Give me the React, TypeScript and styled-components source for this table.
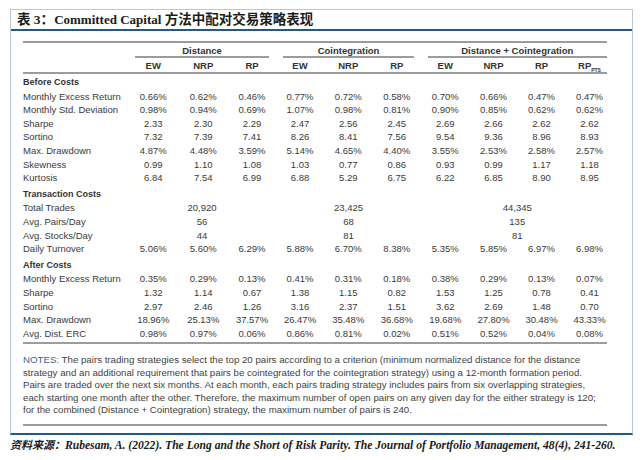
import { Fragment } from 'react';
import styled, { createGlobalStyle } from 'styled-components';

type Row = { label: string; values: string[] };

const beforeCosts: Row[] = [
  { label: 'Monthly Excess Return', values: ['0.66%', '0.62%', '0.46%', '0.77%', '0.72%', '0.58%', '0.70%', '0.66%', '0.47%', '0.47%'] },
  { label: 'Monthly Std. Deviation', values: ['0.98%', '0.94%', '0.69%', '1.07%', '0.98%', '0.81%', '0.90%', '0.85%', '0.62%', '0.62%'] },
  { label: 'Sharpe', values: ['2.33', '2.30', '2.29', '2.47', '2.56', '2.45', '2.69', '2.66', '2.62', '2.62'] },
  { label: 'Sortino', values: ['7.32', '7.39', '7.41', '8.26', '8.41', '7.56', '9.54', '9.36', '8.96', '8.93'] },
  { label: 'Max. Drawdown', values: ['4.87%', '4.48%', '3.59%', '5.14%', '4.65%', '4.40%', '3.55%', '2.53%', '2.58%', '2.57%'] },
  { label: 'Skewness', values: ['0.99', '1.10', '1.08', '1.03', '0.77', '0.86', '0.93', '0.99', '1.17', '1.18'] },
  { label: 'Kurtosis', values: ['6.84', '7.54', '6.99', '6.88', '5.29', '6.75', '6.22', '6.85', '8.90', '8.95'] },
];

// values that span a whole group (Distance / Cointegration / Distance + Cointegration)
const groupRows: Row[] = [
  { label: 'Total Trades', values: ['20,920', '23,425', '44,345'] },
  { label: 'Avg. Pairs/Day', values: ['56', '68', '135'] },
  { label: 'Avg. Stocks/Day', values: ['44', '81', '81'] },
];

const turnover: Row = {
  label: 'Daily Turnover',
  values: ['5.06%', '5.60%', '6.29%', '5.88%', '6.70%', '8.38%', '5.35%', '5.85%', '6.97%', '6.98%'],
};

const afterCosts: Row[] = [
  { label: 'Monthly Excess Return', values: ['0.35%', '0.29%', '0.13%', '0.41%', '0.31%', '0.18%', '0.38%', '0.29%', '0.13%', '0.07%'] },
  { label: 'Sharpe', values: ['1.32', '1.14', '0.67', '1.38', '1.15', '0.82', '1.53', '1.25', '0.78', '0.41'] },
  { label: 'Sortino', values: ['2.97', '2.46', '1.26', '3.16', '2.37', '1.51', '3.62', '2.69', '1.48', '0.70'] },
  { label: 'Max. Drawdown', values: ['18.96%', '25.13%', '37.57%', '26.47%', '35.48%', '36.68%', '19.68%', '27.80%', '30.48%', '43.33%'] },
  { label: 'Avg. Dist. ERC', values: ['0.98%', '0.97%', '0.06%', '0.86%', '0.81%', '0.02%', '0.51%', '0.52%', '0.04%', '0.08%'] },
];

const groups = [
  { name: 'Distance', span: 3 },
  { name: 'Cointegration', span: 3 },
  { name: 'Distance + Cointegration', span: 4 },
];

const colHeads = ['EW', 'NRP', 'RP', 'EW', 'NRP', 'RP', 'EW', 'NRP', 'RP'];

const notes = [
  'The pairs trading strategies select the top 20 pairs according to a criterion (minimum normalized distance for the distance',
  'strategy and an additional requirement that pairs be cointegrated for the cointegration strategy) using a 12-month formation period.',
  'Pairs are traded over the next six months. At each month, each pairs trading strategy includes pairs from six overlapping strategies,',
  'each starting one month after the other. Therefore, the maximum number of open pairs on any given day for the either strategy is 120;',
  'for the combined (Distance + Cointegration) strategy, the maximum number of pairs is 240.',
];

export default function App() {
  const dataRows = (rows: Row[]) =>
    rows.map((r) => (
      <Fragment key={r.label}>
        <Label>{r.label}</Label>
        {r.values.map((v, i) => (
          <Cell key={i}>{v}</Cell>
        ))}
      </Fragment>
    ));

  return (
    <Page>
      <GlobalStyle />
      <Frame>
        <TitleBar>
          表 3：<Latin>Committed Capital</Latin> 方法中配对交易策略表现
        </TitleBar>
        <Content>
          <Table>
            <Head>
              <span />
              {groups.map((g) => (
                <GroupHead key={g.name} $span={g.span}>
                  {g.name}
                </GroupHead>
              ))}
              <span />
              {colHeads.map((h, i) => (
                <ColHead key={i}>{h}</ColHead>
              ))}
              <ColHead>
                RP<Sub>PTS</Sub>
              </ColHead>
            </Head>
            <Body>
              <Section $first>Before Costs</Section>
              {dataRows(beforeCosts)}
              <Section>Transaction Costs</Section>
              {groupRows.map((r) => (
                <Fragment key={r.label}>
                  <Label>{r.label}</Label>
                  {r.values.map((v, i) => (
                    <Cell key={i} $span={groups[i].span}>
                      {v}
                    </Cell>
                  ))}
                </Fragment>
              ))}
              {dataRows([turnover])}
              <Section>After Costs</Section>
              {dataRows(afterCosts)}
            </Body>
          </Table>
          <Notes>
            {notes.map((line, i) => (
              <NoteLine key={i}>
                {i === 0 && <NoteTag>NOTES: </NoteTag>}
                {line}
              </NoteLine>
            ))}
          </Notes>
        </Content>
      </Frame>
      <Source>
        <SourceTag>资料来源：</SourceTag>
        Rubesam, A. (2022). The Long and the Short of Risk Parity. The Journal of Portfolio Management, 48(4), 241-260.
      </Source>
    </Page>
  );
}

const GlobalStyle = createGlobalStyle`
  body {
    margin: 0;
    background: #fff;
  }
`;

const Page = styled.div`
  width: 642px;
  height: 460px;
  padding: 9px 10px 0;
  box-sizing: border-box;
  overflow: hidden;
`;

const Frame = styled.div`
  width: 623px;
  box-sizing: border-box;
  border: 1px solid #b7c8d9;
  border-bottom: 2px solid #1f5b88;
  padding-bottom: 7.5px;
`;

const TitleBar = styled.div`
  height: 19px;
  line-height: 19px;
  padding-left: 6px;
  border-bottom: 2px solid #1f5b88;
  font-family: 'Liberation Serif', 'Noto Sans CJK SC', serif;
  font-weight: bold;
  font-size: 13.5px;
  color: #1c1c1c;
  white-space: nowrap;
`;

const Latin = styled.span`
  font-size: 13px;
`;

const Content = styled.div`
  padding: 10px 0 0 12px;
`;

const Table = styled.div`
  width: 584px;
  border-top: 2px solid #9c9c9c;
  border-bottom: 2px solid #9c9c9c;
  font-family: 'Liberation Sans', Arial, sans-serif;
  font-size: 9.5px;
  color: #3a3a3a;
`;

const Cols = styled.div`
  display: grid;
  grid-template-columns: 105px 50.5px 49.5px 48px 48px 48.5px 48.5px 48.5px 48px 48px 48px;
  white-space: nowrap;
`;

const Head = styled(Cols)`
  border-bottom: 2px solid #9c9c9c;
  font-weight: bold;
  color: #333;
`;

const GroupHead = styled.div<{ $span: number }>`
  grid-column: span ${(p) => p.$span};
  margin: 0 7px;
  height: 15px;
  padding-top: 1px;
  box-sizing: border-box;
  line-height: 14px;
  text-align: center;
  border-bottom: 2px solid #9c9c9c;
`;

const ColHead = styled.div`
  height: 14px;
  padding-top: 1px;
  box-sizing: border-box;
  line-height: 13px;
  text-align: center;
`;

const Sub = styled.sub`
  font-size: 5px;
  vertical-align: -3px;
`;

const Body = styled(Cols)`
  padding: 2px 0 2px;
`;

const Section = styled.div<{ $first?: boolean }>`
  grid-column: 1 / -1;
  padding-top: ${(p) => (p.$first ? 0 : 3)}px;
  line-height: 13.6px;
  font-weight: bold;
  font-size: 9px;
  color: #333;
`;

const Label = styled.div`
  line-height: 13.6px;
`;

const Cell = styled.div<{ $span?: number }>`
  grid-column: span ${(p) => p.$span ?? 1};
  line-height: 13.6px;
  text-align: center;
`;

const Notes = styled.div`
  width: 584px;
  padding: 10px 0 7px;
  border-bottom: 2px solid #9c9c9c;
  font-family: 'Liberation Sans', Arial, sans-serif;
  font-size: 9.7px;
  color: #3f3f3f;
`;

const NoteLine = styled.div`
  line-height: 12.5px;
  white-space: nowrap;
`;

const NoteTag = styled.span`
  color: #3d5f9c;
`;

const Source = styled.div`
  margin-top: 3px;
  line-height: 14px;
  font-family: 'Liberation Serif', 'Noto Sans CJK SC', serif;
  font-weight: bold;
  font-style: italic;
  font-size: 11.6px;
  color: #1a1a1a;
  white-space: nowrap;
`;

const SourceTag = styled.span`
  font-size: 11px;
`;
